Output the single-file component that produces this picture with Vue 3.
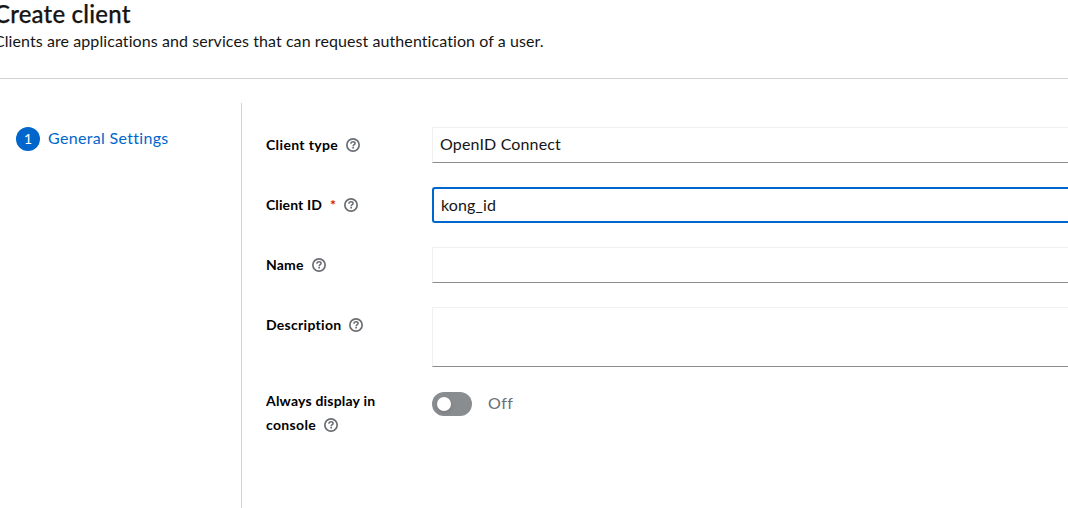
<script setup>
import { ref } from 'vue'

const clientType = ref('OpenID Connect')
const clientId = ref('kong_id')

const fields = [
  { key: 'type', label: 'Client type', value: clientType.value },
  { key: 'id', label: 'Client ID', required: true, focused: true, value: clientId.value },
  { key: 'name', label: 'Name', value: '' },
  { key: 'description', label: 'Description', value: '', tall: true },
  { key: 'console', label: 'Always display in', tail: 'console', toggle: true }
]
</script>

<template>
  <main class="page">
    <header class="header">
      <h1><span>Create client</span></h1>
      <p><span>Clients are applications and services that can request authentication of a user.</span></p>
    </header>
    <div class="wizard">
      <nav class="steps">
        <span class="badge">1</span>
        <span class="step">General Settings</span>
      </nav>
      <form class="form">
        <div v-for="f in fields" :key="f.key" class="row" :class="f.key">
          <div class="label">
            <div v-if="f.tail" class="first"><span class="text">{{ f.label }}</span></div>
            <span class="text last">{{ f.tail || f.label }}</span>
            <span v-if="f.required" class="star">*</span>
            <svg class="help" viewBox="0 0 14 14" fill="none">
              <circle cx="7" cy="7" r="6.15" stroke="#6a6e73" stroke-width="1.7" />
              <path d="M4.9 5.7C5 4.4 5.9 3.8 7.05 3.8C8.25 3.8 9.1 4.45 9.1 5.45C9.1 6.8 7.15 6.7 7.15 8.2" stroke="#6a6e73" stroke-width="1.5" />
              <rect x="6.3" y="8.9" width="1.7" height="1.6" fill="#6a6e73" />
            </svg>
          </div>
          <div v-if="f.toggle" class="toggle"><i class="track"></i><span class="off">Off</span></div>
          <div v-else class="field" :class="{ focused: f.focused, tall: f.tall }"><span>{{ f.value }}</span></div>
        </div>
      </form>
    </div>
  </main>
</template>

<style>
body { background: #fff; }
</style>

<style scoped>
* { box-sizing: border-box; }
.page { width: 1068px; height: 508px; overflow: hidden; background: #fff; color: #151515; font: 16px/24px Lato, "Open Sans", sans-serif; font-variant-ligatures: none; display: flex; flex-direction: column; }
.header { height: 79px; flex: none; border-bottom: 1px solid #d2d2d2; white-space: nowrap; }
h1 { margin: 0 0 1px -6px; font-size: 24px; line-height: 28px; font-weight: 500; letter-spacing: .2px; -webkit-text-stroke: .25px #151515; }
p { margin: 0 0 0 -6px; letter-spacing: .08px; }
.wizard { flex: 1; display: flex; padding-top: 24px; min-height: 0; }
.steps { width: 242px; flex: none; border-right: 1px solid #d2d2d2; padding: 24px 0 0 16px; display: flex; align-items: flex-start; color: #06c; }
.badge { width: 24px; height: 24px; border-radius: 50%; background: #06c; color: #fff; font-size: 14px; text-align: center; margin-right: 8px; }
.step { margin-top: -1px; letter-spacing: .32px; }
.form { flex: 1; padding: 24px 0 0 24px; display: flex; flex-direction: column; gap: 24px; min-width: 0; }
.row { display: grid; grid-template-columns: 166px 1fr; align-items: start; }
.label { padding-top: 6px; font-size: 14px; font-weight: 700; color: #000; white-space: nowrap; letter-spacing: .2px; }
.type .text { letter-spacing: .36px; }
.description .text { letter-spacing: .29px; }
.console .last { letter-spacing: .34px; }
.id .label { letter-spacing: .1px; }
.console .label { padding-top: 0; margin-top: -2px; }
.help { width: 14px; height: 14px; margin-left: 8px; vertical-align: -2px; }
.star { color: #c9190b; margin-left: 8px; }
.field { height: 36px; border: 1px solid #f0f0f0; border-right: 0; border-bottom-color: #8a8d90; padding: 4px 7px; letter-spacing: .15px; }
.field.tall { height: 60px; }
.field.focused { border: 2px solid #06c; border-right: 0; border-radius: 3px 0 0 3px; padding-top: 4px; }
.toggle { display: flex; align-items: center; color: #6a6e73; padding-top: 1px; }
.track { width: 40px; height: 24px; border-radius: 12px; background: #8a8d90; padding: 5px; }
.track::after { content: ""; display: block; width: 14px; height: 14px; border-radius: 50%; background: #fff; box-shadow: 0 2px 4px rgba(3, 3, 3, .12); }
.off { margin: -2px 0 0 16px; letter-spacing: .4px; }
</style>
